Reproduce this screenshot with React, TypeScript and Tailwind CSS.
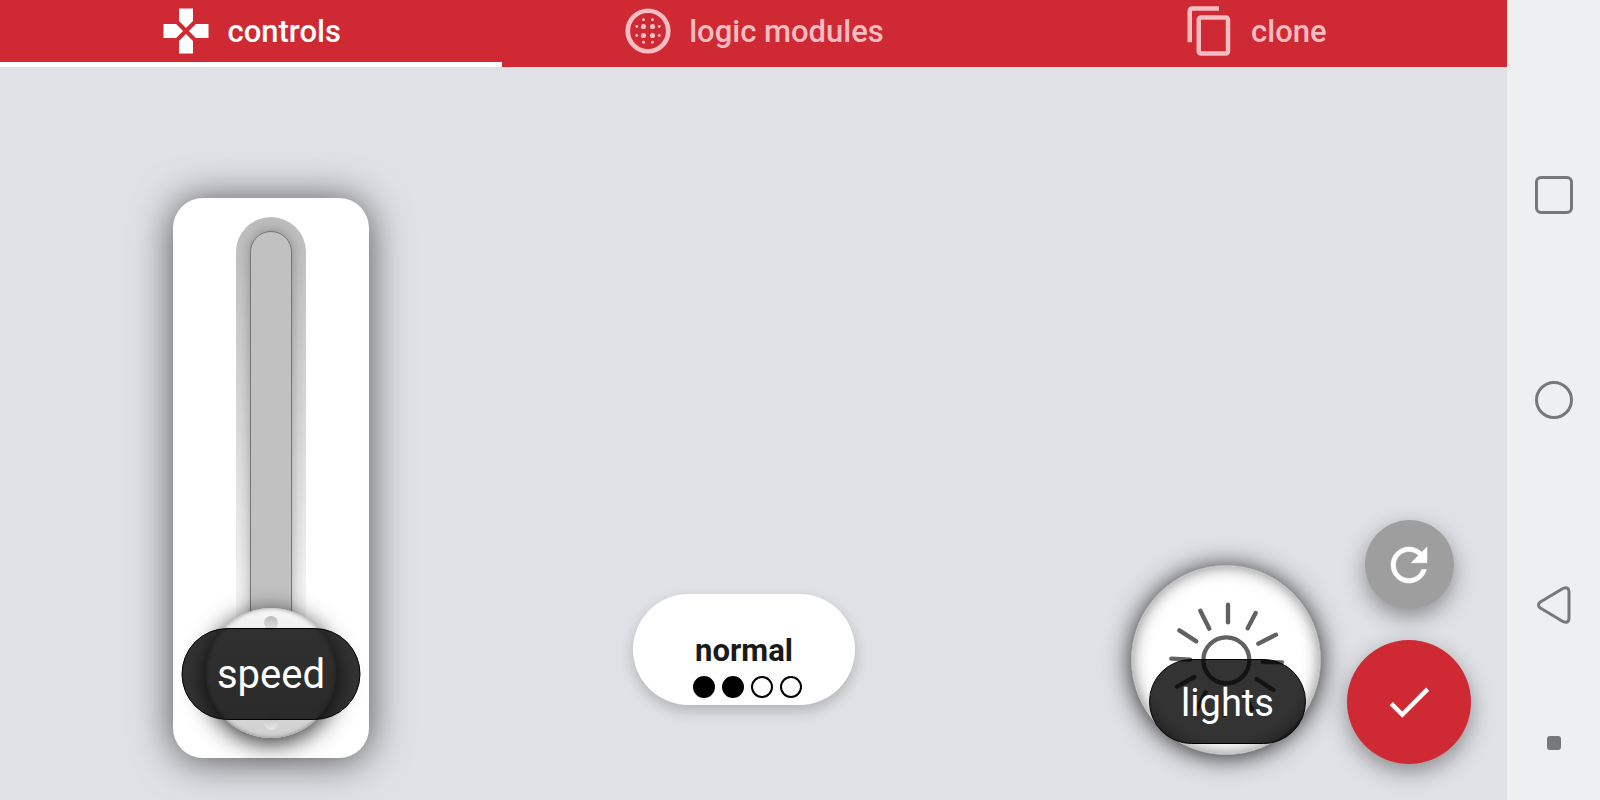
import { useState, type ReactNode } from "react";
import { MdCheck, MdContentCopy } from "react-icons/md";

function GamepadIcon() {
  return (
    <svg viewBox="0 0 24 24" className="size-[54px]" fill="currentColor" aria-hidden="true">
      <path d="M15.1 7.6V2H8.9v5.6l3.1 3.1zM7.6 8.9H2v6.2h5.6l3.1-3.1zM8.9 16.4V22h6.2v-5.6L12 13.3zM16.4 8.9L13.3 12l3.1 3.1H22V8.9z" />
    </svg>
  );
}

function LogicIcon() {
  return (
    <svg viewBox="0 0 24 24" className="size-[54px]" fill="currentColor" aria-hidden="true">
      <circle cx="12" cy="12" r="9" fill="none" stroke="currentColor" strokeWidth="2.1" />
      {[10, 14].map((a) => (
        <g key={a}>
          <circle cx={a} cy="10" r="1.15" />
          <circle cx={a} cy="14" r="1.15" />
          <circle cx={a} cy="7" r="0.65" />
          <circle cx={a} cy="17" r="0.65" />
          <circle cx="7" cy={a} r="0.65" />
          <circle cx="17" cy={a} r="0.65" />
        </g>
      ))}
    </svg>
  );
}

function RefreshIcon() {
  return (
    <svg viewBox="0 0 24 24" className="size-[54px]" fill="currentColor" stroke="currentColor" strokeWidth="0.25" aria-hidden="true">
      <path d="M17.65 6.35C16.2 4.9 14.21 4 12 4c-4.42 0-7.99 3.58-7.99 8s3.57 8 7.99 8c3.73 0 6.84-2.55 7.73-6h-2.08c-.82 2.33-3.04 4-5.65 4-3.31 0-6-2.69-6-6s2.69-6 6-6c1.66 0 3.14.69 4.22 1.78L13 11h7V4l-2.35 2.35z" />
    </svg>
  );
}

const tabs: { id: string; icon: ReactNode }[] = [
  { id: "controls", icon: <GamepadIcon /> },
  { id: "logic modules", icon: <LogicIcon /> },
  { id: "clone", icon: <MdContentCopy size={54} /> },
];

// Rays of the lamp symbol: x1, y1, x2, y2
const rays = [
  [354, 194, 354, 247],
  [271, 212, 298, 266],
  [437, 219, 413, 265],
  [208, 271, 259, 304],
  [498, 284, 445, 311],
  [184, 356, 241, 359],
  [458, 366, 516, 367],
  [201, 440, 253, 411],
  [440, 417, 490, 450],
  [287, 456, 262, 506],
  [345, 470, 344, 526],
  [404, 462, 426, 508],
];

function TabBar() {
  const [active, setActive] = useState("controls");
  return (
    <nav className="grid h-[67px] grid-cols-3 bg-[#cf2933]" role="tablist">
      {tabs.map((tab) => (
        <button
          key={tab.id}
          type="button"
          role="tab"
          aria-selected={tab.id === active}
          onClick={() => setActive(tab.id)}
          className={
            tab.id === active
              ? "flex items-center justify-center gap-3.5 border-b-[5px] border-white pr-0.5 text-[31px] leading-9 font-medium text-white"
              : "flex items-center justify-center gap-3.5 border-b-[5px] border-transparent pr-0.5 text-[31px] leading-9 font-medium text-[#f5bcc1]"
          }
        >
          {tab.icon}
          <span className="pt-0.5">{tab.id}</span>
        </button>
      ))}
    </nav>
  );
}

function SpeedSlider() {
  return (
    <div className="relative flex h-[560px] w-[196px] flex-col items-center rounded-[30px] bg-white pt-[19px] shadow-[0_2px_40px_rgba(0,0,0,0.65)]">
      <div className="flex h-[460px] w-[70px] justify-center rounded-t-full bg-linear-to-b from-[#bdbdbd] to-white pt-3.5">
        <div className="w-[42px] rounded-t-full border border-[#757575] bg-[#c1c1c1] shadow-[0_0_14px_rgba(0,0,0,0.3)]" />
      </div>
      <div className="absolute bottom-5 left-1/2 flex size-[130px] -translate-x-1/2 flex-col items-center justify-between rounded-full bg-linear-to-b from-[#f6f6f6] to-[#cfcfcf] py-2 shadow-[0_5px_24px_rgba(0,0,0,0.85),inset_0_0_4px_rgba(0,0,0,0.4)]">
        <span className="size-3.5 rounded-full bg-linear-to-b from-[#bcbcbc] to-[#e2e2e2]" />
        <span className="size-3.5 rounded-full bg-linear-to-b from-[#c6c6c6] to-[#e6e6e6]" />
      </div>
      <input
        id="speed"
        type="range"
        min={0}
        max={100}
        defaultValue={0}
        className="absolute inset-0 size-full cursor-pointer opacity-0 [direction:rtl] [writing-mode:vertical-lr]"
      />
      <label
        htmlFor="speed"
        className="absolute bottom-[38px] left-1/2 flex h-[92px] w-[179px] -translate-x-1/2 items-center justify-center rounded-full border border-black bg-black/80 pt-0.5 text-[40px] leading-[46px] text-white"
      >
        speed
      </label>
    </div>
  );
}

function ModeButton() {
  const [mode, setMode] = useState(2);
  return (
    <button
      type="button"
      onClick={() => setMode((mode % 4) + 1)}
      className="flex h-[111px] w-[222px] flex-col items-center justify-end rounded-full bg-white pb-[7px] shadow-[0_6px_14px_rgba(0,0,0,0.2)]"
    >
      <span className="text-[31px] leading-9 font-bold text-[#1a1a1a]">normal</span>
      <span className="mt-[7px] flex">
        {[1, 2, 3, 4].map((n) => (
          <span
            key={n}
            className={
              n <= mode
                ? "ml-[7px] size-[22px] rounded-full border-2 border-black bg-black"
                : "ml-[7px] size-[22px] rounded-full border-2 border-black"
            }
          />
        ))}
      </span>
    </button>
  );
}

function LightsButton() {
  return (
    <button
      type="button"
      className="relative size-[190px] rounded-full border border-[#b8b8b8] bg-white shadow-[0_2px_26px_rgba(0,0,0,0.85),inset_0_0_16px_rgba(0,0,0,0.5)]"
    >
      <svg viewBox="66 78 564 564" className="size-full" aria-hidden="true">
        <g fill="none" stroke="#616161" strokeWidth="13" strokeLinecap="round">
          <circle cx="349" cy="361" r="69" />
          {rays.map(([x1, y1, x2, y2]) => (
            <line key={`${x1}-${y1}`} x1={x1} y1={y1} x2={x2} y2={y2} />
          ))}
        </g>
      </svg>
      <span className="absolute bottom-2.5 left-[17px] flex h-[85px] w-[157px] items-center justify-center rounded-full border border-black bg-black/80 pt-0.5 text-[38px] leading-[46px] text-white">
        lights
      </span>
    </button>
  );
}

function SystemBar() {
  return (
    <aside className="flex w-[93px] shrink-0 flex-col items-center bg-[#eeeff1] pt-44 text-[#777978]">
      <button type="button" aria-label="Recent apps" className="size-[38px] rounded-md border-3 border-current" />
      <button type="button" aria-label="Home" className="mt-[167px] size-[38px] rounded-full border-3 border-current" />
      <button type="button" aria-label="Back" className="mt-[167px] size-[38px]">
        <svg viewBox="0 0 38 38" className="size-full" fill="none" stroke="currentColor" strokeWidth="3" strokeLinejoin="round">
          <path d="M28.3 2.3 L4.9 16.3 Q2 19 4.9 21.7 L28.3 35.7 Q33.5 37.6 34 32.5 V5.5 Q33.5 0.4 28.3 2.3 Z" />
        </svg>
      </button>
      <button type="button" aria-label="Hide navigation bar" className="mt-28 size-3.5 rounded-[3px] bg-current" />
    </aside>
  );
}

export default function App() {
  return (
    <div className="flex min-h-screen bg-[#e0e1e6] font-[Roboto,sans-serif]">
      <div className="flex flex-1 flex-col">
        <TabBar />
        <main className="flex flex-1 items-end pr-9 pl-[173px]">
          <div className="pb-[42px]">
            <SpeedSlider />
          </div>
          <div className="flex flex-1 justify-center pr-3 pb-[95px]">
            <ModeButton />
          </div>
          <div className="flex items-end gap-[26px]">
            <div className="flex pb-[45px]">
              <LightsButton />
            </div>
            <div className="flex flex-col items-center gap-[31px] pb-9">
              <button
                type="button"
                aria-label="Reset"
                className="flex size-[89px] items-center justify-center rounded-full bg-[#9e9e9e] text-white shadow-[0_8px_22px_rgba(0,0,0,0.38)]"
              >
                <RefreshIcon />
              </button>
              <button
                type="button"
                aria-label="Confirm"
                className="flex size-[124px] items-center justify-center rounded-full bg-[#cf2933] text-white shadow-[0_8px_22px_rgba(0,0,0,0.38)]"
              >
                <MdCheck size={54} />
              </button>
            </div>
          </div>
        </main>
      </div>
      <SystemBar />
    </div>
  );
}
